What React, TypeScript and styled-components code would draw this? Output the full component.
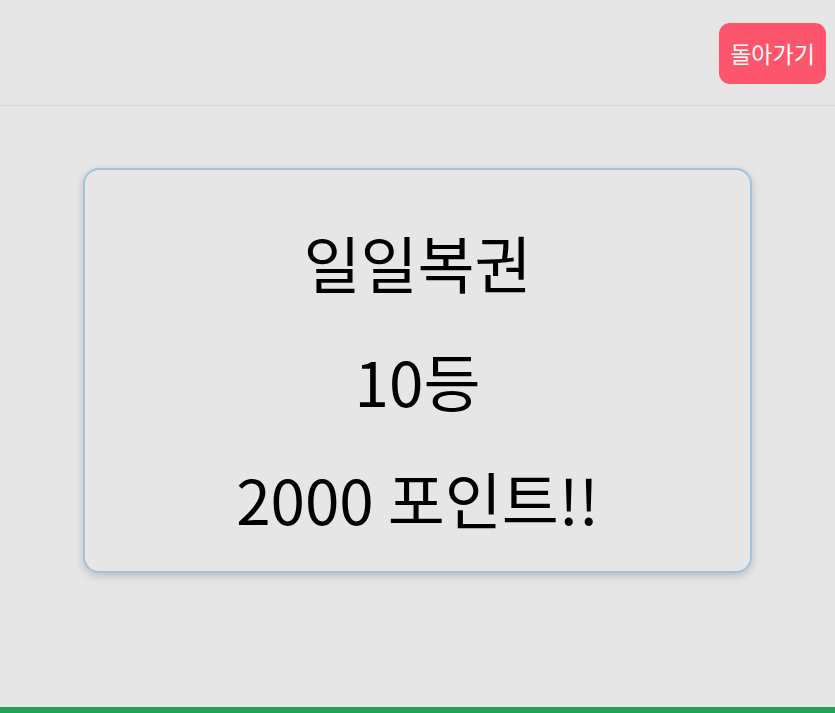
import React from 'react';
import styled, { createGlobalStyle } from 'styled-components';

const GlobalStyle = createGlobalStyle`
  html, body {
    margin: 0;
    padding: 0;
    background: #e6e6e6;
  }
  body {
    font-family: 'Noto Sans CJK KR', 'Noto Sans', sans-serif;
  }
`;

const Page = styled.div`
  width: 835px;
  height: 713px;
  display: flex;
  flex-direction: column;
  background: #e6e6e6;
  overflow: hidden;
`;

const Header = styled.header`
  height: 106px;
  flex: 0 0 auto;
  display: flex;
  justify-content: flex-end;
  align-items: flex-start;
  padding: 23px 9px 0 0;
  box-sizing: border-box;
  border-bottom: 1px solid #d8d8d8;
`;

const BackButton = styled.button`
  width: 107px;
  height: 61px;
  border: none;
  border-radius: 11px;
  background: #fd566c;
  color: #ffffff;
  font: 400 23px/1 'Noto Sans CJK KR', sans-serif;
  cursor: pointer;
  padding: 0;
`;

const Main = styled.main`
  flex: 1 1 auto;
  padding: 62px 83px 0;
  box-sizing: border-box;
`;

const Card = styled.section`
  height: 405px;
  box-sizing: border-box;
  border: 2px solid #9cc4e2;
  border-radius: 16px;
  box-shadow: 0 3px 8px rgba(0, 0, 0, 0.18);
  display: flex;
  flex-direction: column;
  align-items: center;
  gap: 38px;
  padding-top: 52px;
`;

const Line = styled.p`
  margin: 0;
  font: 400 62px/80px 'Noto Sans CJK KR', sans-serif;
  color: #000;
`;

const Footer = styled.div`
  height: 6px;
  flex: 0 0 auto;
  background: #1fa352;
`;

export default function App() {
  return (
    <>
      <GlobalStyle />
      <Page>
        <Header>
          <BackButton>돌아가기</BackButton>
        </Header>
        <Main>
          <Card>
            <Line>일일복권</Line>
            <Line>10등</Line>
            <Line>2000 포인트!!</Line>
          </Card>
        </Main>
        <Footer />
      </Page>
    </>
  );
}
